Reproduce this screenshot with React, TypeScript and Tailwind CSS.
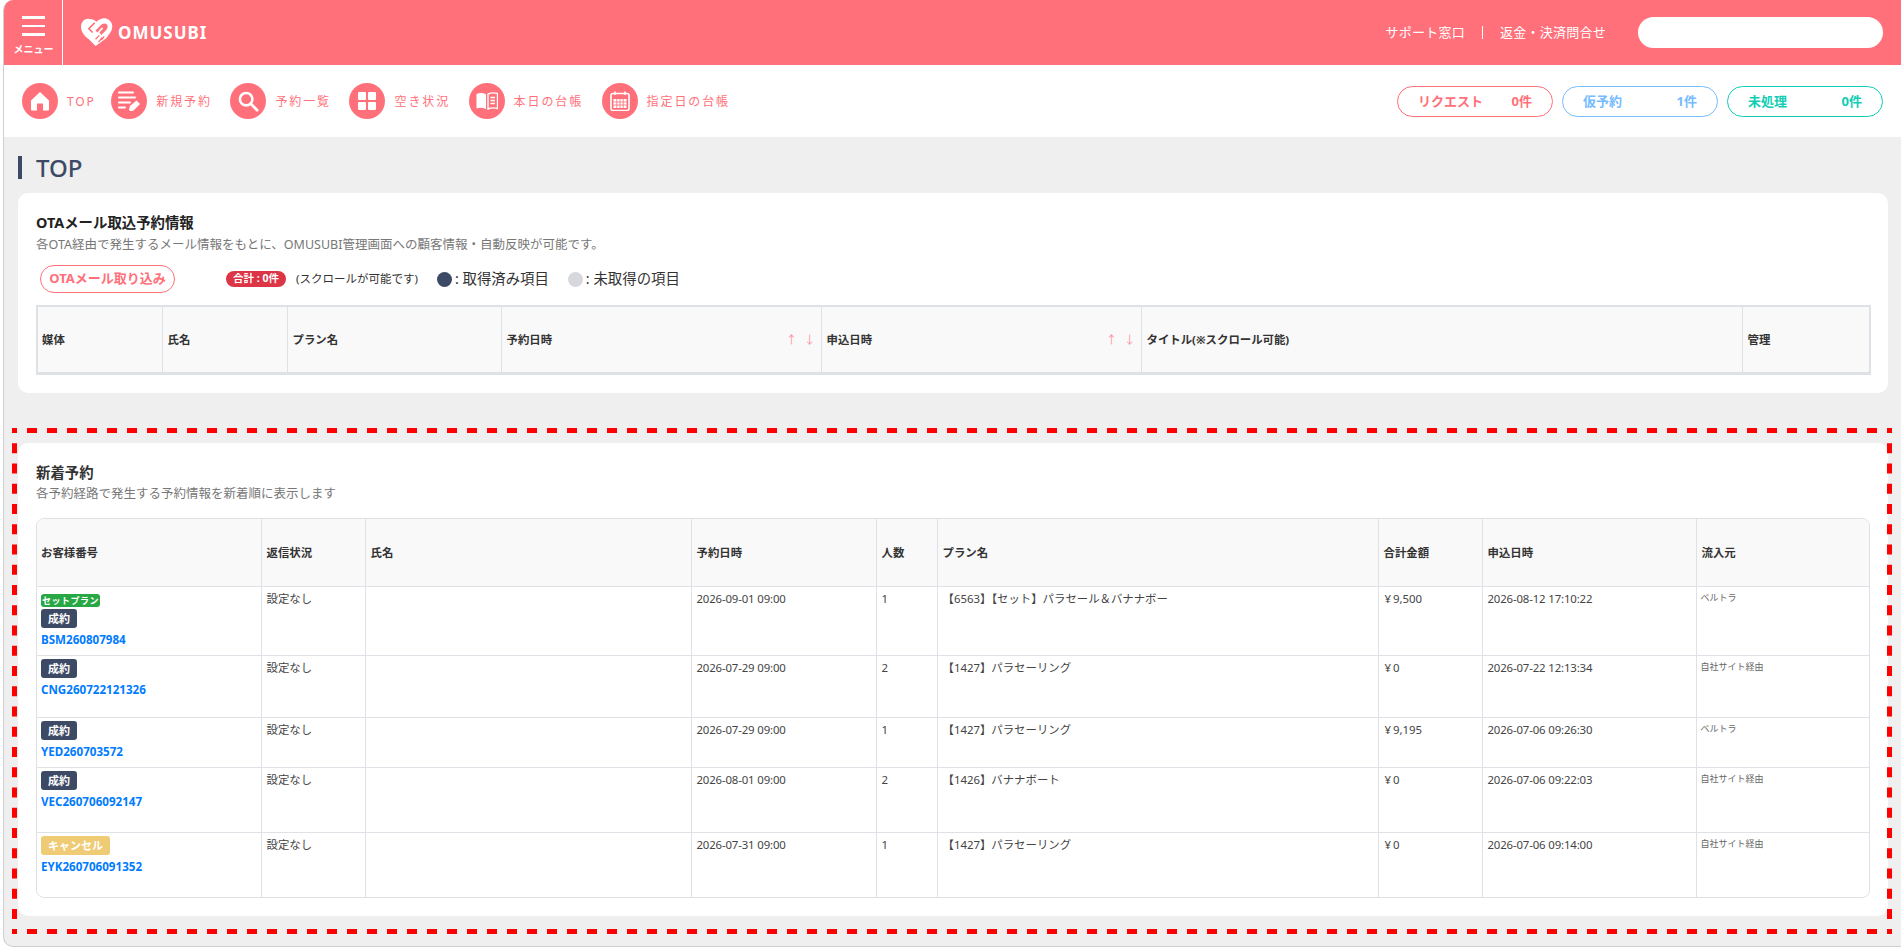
import React from "react";

const FONT = "font-['Noto_Sans','Noto_Sans_CJK_JP',sans-serif]";

function Logo() {
  return (
    <svg width="32" height="29" viewBox="0 0 33 30" className="shrink-0">
      <path d="M9 1 C4 0 0 4 0 9 C0 14 3 18 8 22 L15 29 L18 27 L26 21 L31 14 C33 10 33 5 29 2 C25 -1 20 0 16 4 C14 2 12 1 9 1 Z" fill="#fff" />
      <path d="M15 13 L21.5 6.5 Q25 4.5 27 7 Q28.5 9.5 26.5 12 L21 17.5 L19 15 L23 10.5 L21.5 9.5 L17 15 Z" fill="#ff707a" />
      <path d="M14 5 L8 11 L12 15" fill="none" stroke="#ff707a" strokeWidth="1.6" />
      <path d="M15 22 L19 18 M18 25 L22 20 M21 23 L24 19" stroke="#ff707a" strokeWidth="1.3" />
    </svg>
  );
}

function HomeIcon() {
  return (
    <svg width="20" height="20" viewBox="0 0 20 20">
      <path d="M10 1 L19 9.5 V18.5 Q19 19.5 18 19.5 H13 V12.5 H7 V19.5 H2 Q1 19.5 1 18.5 V9.5 Z" fill="#fff" />
    </svg>
  );
}
function ReserveIcon() {
  return (
    <svg width="24" height="24" viewBox="0 0 24 24">
      <path d="M2 3.5 H16 M2 8.5 H18 M2 13.5 H13 M2 18.5 H8" stroke="#fff" strokeWidth="2" fill="none" strokeLinecap="round" />
      <path d="M12 21 L13 17 L19.5 11.5 L23 15 L17 21 Q16 22 15 22 H13 Z" fill="#fff" />
    </svg>
  );
}
function SearchIcon() {
  return (
    <svg width="22" height="22" viewBox="0 0 24 24">
      <circle cx="10" cy="10" r="6.8" stroke="#fff" strokeWidth="2.8" fill="none" />
      <path d="M15 15 L22 22" stroke="#fff" strokeWidth="3" strokeLinecap="round" />
    </svg>
  );
}
function GridIcon() {
  return (
    <svg width="18" height="18" viewBox="0 0 18 18">
      <rect x="0" y="0" width="8" height="8" rx="1" fill="#fff" />
      <rect x="10" y="0" width="8" height="8" rx="1" fill="#fff" />
      <rect x="0" y="10" width="8" height="8" rx="1" fill="#fff" />
      <rect x="10" y="10" width="8" height="8" rx="1" fill="#fff" />
    </svg>
  );
}
function BookIcon() {
  return (
    <svg width="22" height="18" viewBox="0 0 22 18">
      <path d="M0.5 2 Q5 0 10 2.2 V17 Q5 15 0.5 16.5 Z" fill="#fff" />
      <path d="M12 2.2 Q16 0 21.5 1.5 V16.5 Q16 15 12 17 Z" fill="none" stroke="#fff" strokeWidth="1.4" />
      <path d="M14.5 5.5 H19 M14.5 8.5 H19 M14.5 11.5 H19" stroke="#fff" strokeWidth="1.3" />
    </svg>
  );
}
function CalendarIcon() {
  return (
    <svg width="20" height="20" viewBox="0 0 20 20">
      <rect x="1" y="2.5" width="18" height="17" rx="2" fill="none" stroke="#fff" strokeWidth="1.6" />
      <path d="M5 0.5 V4 M15 0.5 V4" stroke="#fff" strokeWidth="1.6" />
      <rect x="3.5" y="8" width="13" height="9" fill="#fff" />
      <path d="M6.8 8 V17 M10 8 V17 M13.2 8 V17 M3.5 11 H16.5 M3.5 14 H16.5" stroke="#ff707a" strokeWidth="0.8" />
    </svg>
  );
}

function NavItem({ icon, label, cls }: { icon: React.ReactNode; label: string; cls?: string }) {
  return (
    <div className={`flex items-center gap-[9px] ${cls ?? ""}`}>
      <span className="flex h-9 w-9 items-center justify-center rounded-full bg-[#ff707a]">{icon}</span>
      <span className="mt-[1px] text-[12px] leading-none tracking-[1.9px] text-[#ff707a]">{label}</span>
    </div>
  );
}

function StatPill({ label, count, cls }: { label: string; count: string; cls: string }) {
  return (
    <div className={`flex h-[31px] w-[156px] items-center justify-between rounded-full border bg-white px-[20px] pt-[1px] text-[13px] font-bold ${cls}`}>
      <span>{label}</span>
      <span>{count}</span>
    </div>
  );
}

function Th({ children, arrows }: { children: React.ReactNode; arrows?: boolean }) {
  return (
    <th className="border border-[#dee2e6] bg-[#f9f9f9] pl-[5px] pr-[4px] text-left align-middle text-[11.4px] font-bold text-[#333] first:pl-[4px]">
      {arrows ? (
        <div className="flex items-center justify-between">
          <span>{children}</span>
          <span className="flex gap-[7px] pr-[1px] font-normal text-[#ff8fa3]">
            <span>↑</span>
            <span>↓</span>
          </span>
        </div>
      ) : (
        children
      )}
    </th>
  );
}

function Badge({ children, cls }: { children: React.ReactNode; cls: string }) {
  return (
    <span className={`block h-[19px] w-fit rounded-[3px] px-[7px] text-[11px] font-bold leading-[19px] text-white ${cls}`}>
      {children}
    </span>
  );
}

type Row = {
  h: string;
  set?: boolean;
  cancel?: boolean;
  id: string;
  date: string;
  n: string;
  plan: string;
  total: string;
  applied: string;
  src: string;
};

const rows: Row[] = [
  { h: "h-[69px]", set: true, id: "BSM260807984", date: "2026-09-01 09:00", n: "1", plan: "【6563】【セット】パラセール＆バナナボー", total: "9,500", applied: "2026-08-12 17:10:22", src: "ベルトラ" },
  { h: "h-[62px]", id: "CNG260722121326", date: "2026-07-29 09:00", n: "2", plan: "【1427】パラセーリング", total: "0", applied: "2026-07-22 12:13:34", src: "自社サイト経由" },
  { h: "h-[50px]", id: "YED260703572", date: "2026-07-29 09:00", n: "1", plan: "【1427】パラセーリング", total: "9,195", applied: "2026-07-06 09:26:30", src: "ベルトラ" },
  { h: "h-[65px]", id: "VEC260706092147", date: "2026-08-01 09:00", n: "2", plan: "【1426】バナナボート", total: "0", applied: "2026-07-06 09:22:03", src: "自社サイト経由" },
  { h: "h-[65px]", cancel: true, id: "EYK260706091352", date: "2026-07-31 09:00", n: "1", plan: "【1427】パラセーリング", total: "0", applied: "2026-07-06 09:14:00", src: "自社サイト経由" },
];

const td = "border border-[#dee2e6] pl-[5px] pr-[4px] pt-[4px] align-top text-[11.4px] leading-[16px] text-[#444]";
const tdDate = "border border-[#dee2e6] pl-[5px] pr-[4px] pt-[4px] align-top text-[11.4px] leading-[16px] tracking-[-0.15px] text-[#444]";

export default function App() {
  return (
    <div className={`h-[950px] w-[1901px] overflow-hidden bg-white pl-[3px] ${FONT}`}>
      <div className="h-[947px] overflow-hidden rounded-l-[10px] border-b border-l border-[#cfcfcf] bg-[#efefef]">
        {/* header */}
        <header className="flex h-[65px] items-center bg-[#ff707a]">
          <div className="flex h-full w-[59px] flex-col items-center border-r border-white pl-[1px]">
            <span className="mt-[16px] h-[2.5px] w-[23px] bg-white" />
            <span className="mt-[6px] h-[2.5px] w-[23px] bg-white" />
            <span className="mt-[6px] h-[2.5px] w-[23px] bg-white" />
            <span className="mt-[6px] text-[10px] font-bold leading-[14px] text-white">メニュー</span>
          </div>
          <div className="ml-[18px] flex items-center gap-[5px]">
            <Logo />
            <span className="text-[17px] font-bold leading-none tracking-[1px] text-white">OMUSUBI</span>
          </div>
          <div className="ml-auto flex items-center pr-[18px] text-[13px] tracking-[0.25px] text-white">
            <span>サポート窓口</span>
            <span className="mx-[17px] h-[13px] w-px bg-white" />
            <span>返金・決済問合せ</span>
            <div className="ml-[32px] h-[31px] w-[245px] rounded-full bg-white" />
          </div>
        </header>

        {/* nav */}
        <nav className="flex h-[72px] items-center bg-white pl-[18px] pr-[18px]">
          <div className="flex items-center gap-[18.5px]">
            <NavItem icon={<HomeIcon />} label="TOP" cls="mr-[-3px]" />
            <NavItem icon={<ReserveIcon />} label="新規予約" />
            <NavItem icon={<SearchIcon />} label="予約一覧" />
            <NavItem icon={<GridIcon />} label="空き状況" />
            <NavItem icon={<BookIcon />} label="本日の台帳" />
            <NavItem icon={<CalendarIcon />} label="指定日の台帳" />
          </div>
          <div className="ml-auto flex gap-[9px]">
            <StatPill label="リクエスト" count="0件" cls="border-[#ff707a] text-[#ff707a]" />
            <StatPill label="仮予約" count="1件" cls="border-[#76bcff] text-[#76bcff]" />
            <StatPill label="未処理" count="0件" cls="border-[#10cdb5] text-[#10cdb5]" />
          </div>
        </nav>

        {/* main */}
        <main className="pl-[14px] pr-[13px]">
          <div className="flex h-[56px] items-center pt-[5px]">
            <span className="h-[23px] w-[4px] bg-[#3d4a66]" />
            <h1 className="ml-[14px] mt-[1px] text-[24px] font-medium leading-none text-[#3d4a66]">TOP</h1>
          </div>

          <section className="h-[200px] rounded-[10px] bg-white pl-[18px] pr-[18px] pt-[20px]">
            <h2 className="text-[14.4px] font-bold leading-[20px] text-[#222]">OTAメール取込予約情報</h2>
            <p className="mt-[2px] text-[12.5px] leading-[20px] text-[#777]">各OTA経由で発生するメール情報をもとに、OMUSUBI管理画面への顧客情報・自動反映が可能です。</p>
            <div className="mt-[10px] flex h-[28px] items-center pl-[4px]">
              <button className="h-[28px] w-[135px] rounded-full border border-[#ff707a] text-[13px] font-bold text-[#ff707a]">OTAメール取り込み</button>
              <span className="ml-[51px] flex h-[16px] w-[60px] items-center justify-center rounded-full bg-[#dc3545] text-[10.5px] font-bold text-white">合計 : 0件</span>
              <span className="ml-[10px] text-[11.5px] text-[#333]">(スクロールが可能です)</span>
              <span className="ml-[19px] h-[15px] w-[15px] rounded-full bg-[#3d4a66]" />
              <span className="ml-[3px] text-[14.4px] text-[#333]">: 取得済み項目</span>
              <span className="ml-[19px] h-[15px] w-[15px] rounded-full bg-[#d6d8de]" />
              <span className="ml-[3px] text-[14.4px] text-[#333]">: 未取得の項目</span>
            </div>
            <table className="mt-[12px] w-[1833px] table-fixed border-collapse border-b-[3px] border-l-[2px] border-r-[2px] border-t-[2px] border-[#dee2e6]">
              <colgroup>
                <col className="w-[125px]" />
                <col className="w-[125px]" />
                <col className="w-[214px]" />
                <col className="w-[320px]" />
                <col className="w-[320px]" />
                <col className="w-[601px]" />
                <col className="w-[128px]" />
              </colgroup>
              <thead>
                <tr className="h-[67px]">
                  <Th>媒体</Th>
                  <Th>氏名</Th>
                  <Th>プラン名</Th>
                  <Th arrows>予約日時</Th>
                  <Th arrows>申込日時</Th>
                  <Th>タイトル(※スクロール可能)</Th>
                  <Th>管理</Th>
                </tr>
              </thead>
            </table>
          </section>

          <div className="relative mt-[50px]">
            <section className="h-[473px] rounded-[10px] bg-white pl-[18px] pr-[18px] pt-[20px]">
              <h2 className="text-[14.4px] font-bold leading-[20px] text-[#333]">新着予約</h2>
              <p className="mt-[1px] text-[12.5px] leading-[20px] text-[#777]">各予約経路で発生する予約情報を新着順に表示します</p>
              <div className="mt-[14px] w-[1834px] overflow-hidden rounded-[8px] border border-[#dee2e6]">
                <table className="w-full table-fixed border-collapse border-hidden">
                  <colgroup>
                    <col className="w-[224px]" />
                    <col className="w-[104px]" />
                    <col className="w-[326px]" />
                    <col className="w-[185px]" />
                    <col className="w-[61px]" />
                    <col className="w-[441px]" />
                    <col className="w-[104px]" />
                    <col className="w-[214px]" />
                    <col className="w-[175px]" />
                  </colgroup>
                  <thead>
                    <tr className="h-[67px]">
                      <Th>お客様番号</Th>
                      <Th>返信状況</Th>
                      <Th>氏名</Th>
                      <Th>予約日時</Th>
                      <Th>人数</Th>
                      <Th>プラン名</Th>
                      <Th>合計金額</Th>
                      <Th>申込日時</Th>
                      <Th>流入元</Th>
                    </tr>
                  </thead>
                  <tbody>
                    {rows.map((r) => (
                      <tr key={r.id} className={r.h}>
                        <td className="border border-[#dee2e6] px-[4px] pt-[3px] align-top">
                          {r.set && (
                            <span className="mb-[2px] mt-[4px] block h-[13px] w-[59px] rounded-[3px] bg-[#28a745] text-center text-[9px] font-bold leading-[13px] tracking-[0.5px] text-white">セットプラン</span>
                          )}
                          {r.cancel ? <Badge cls="bg-[#f0cb75]">キャンセル</Badge> : <Badge cls="bg-[#3d4a66]">成約</Badge>}
                          <a className="mt-[3px] block text-[11.6px] font-bold leading-[18px] text-[#007bff]">{r.id}</a>
                        </td>
                        <td className={td}>設定なし</td>
                        <td className={td} />
                        <td className={tdDate}>{r.date}</td>
                        <td className={td}>{r.n}</td>
                        <td className={td}>{r.plan}</td>
                        <td className={td}>
                          <span className="ml-[1px] mr-[2px]">¥</span>{r.total}
                        </td>
                        <td className={tdDate}>{r.applied}</td>
                        <td className="border border-[#dee2e6] px-[4px] pt-[3px] align-top text-[9px] leading-[16px] text-[#666]">{r.src}</td>
                      </tr>
                    ))}
                  </tbody>
                </table>
              </div>
            </section>
            {/* red dashed annotation drawn over the card */}
            <svg width="1880" height="506" className="pointer-events-none absolute -left-[6px] -top-[15px]">
              <g stroke="#ff0000" strokeWidth="5" fill="none">
                <line x1="0" y1="2.5" x2="1880" y2="2.5" strokeDasharray="10 10" strokeDashoffset="5" />
                <line x1="0" y1="503.5" x2="1880" y2="503.5" strokeDasharray="10 10" strokeDashoffset="5" />
                <line x1="2.5" y1="5" x2="2.5" y2="501" strokeDasharray="10 10.25" strokeDashoffset="10" />
                <line x1="1877.5" y1="5" x2="1877.5" y2="501" strokeDasharray="10 10.25" strokeDashoffset="10" />
              </g>
            </svg>
          </div>
        </main>
      </div>
    </div>
  );
}
